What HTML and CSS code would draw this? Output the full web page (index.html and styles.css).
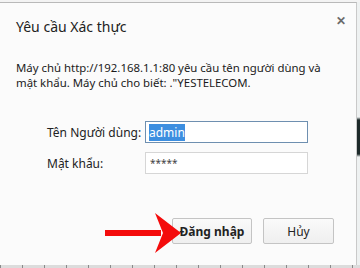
FILE: index.html
```html
<!DOCTYPE html>
<html lang="vi">
<head>
  <meta charset="UTF-8" />
  <title>Yêu cầu Xác thực</title>
  <link rel="stylesheet" href="styles.css">
</head>
<body>

<div class="screen">
  <div class="dialog">
    <div class="title-row">
      <h1>Yêu cầu Xác thực</h1>
      <span class="close">&#x2715;</span>
    </div>

    <p class="message">Máy chủ http://192.168.1.1:80 yêu cầu tên người dùng và mật khẩu. Máy chủ cho biết: ."YESTELECOM.</p>

    <div class="form">
      <label for="user">Tên Người dùng:</label>
      <div class="field focused"><span class="selected">admin</span></div>
      <label for="pass">Mật khẩu:</label>
      <div class="field"><span class="dots">*****</span></div>
    </div>

    <div class="actions">
      <!-- red arrow pointing at login -->
      <svg class="arrow" width="76" height="40" viewBox="0 0 76 40">
        <rect x="0" y="17" width="56" height="6" fill="#f40c0c"/>
        <path d="M50 0 L76 20 L50 40 L58 20 Z" fill="#f40c0c"/>
      </svg>
      <button class="btn primary">Đăng nhập</button>
      <button class="btn">Hủy</button>
    </div>
  </div>
  <div class="side"></div>
</div>
<div class="bottom"></div>

</body>
</html>
```

FILE: styles.css
```css
* {
  box-sizing: border-box;
  margin: 0;
  padding: 0;
}

body {
  width: 360px;
  height: 268px;
  overflow: hidden;
  background: #f3f3f3;
  font-family: 'Noto Sans', 'Open Sans', sans-serif;
  color: #1e1e1e;
}

.screen {
  display: flex;
  height: 265px;
  padding-top: 2px;
}

.dialog {
  flex: 0 0 357px;
  background: #fbfbfb;
  border-top: 1px solid #b9b9b9;
  border-right: 1px solid #c9c9c9;
  padding: 0 0 0 16px;
  position: relative;
}

.side {
  flex: 1;
  background: linear-gradient(#eef1f1 0, #eef1f1 115px, #1d2a2a 118px, #1d2a2a 152px, #eef1f1 155px);
}

.title-row {
  display: flex;
  justify-content: space-between;
  align-items: center;
  height: 32px;
  margin-top: 7px;
  padding-right: 10px;
}

h1 {
  font-size: 14px;
  font-weight: 400;
  color: #222;
}

.close {
  align-self: flex-start;
  margin-top: 2px;
  font-size: 12px;
  font-weight: 700;
  color: #6b6b6b;
}

.message {
  margin-top: 18px;
  font-size: 11.4px;
  line-height: 15px;
  width: 320px;
  color: #1a1a1a;
}

.form {
  margin-top: 31px;
  margin-left: 31px;
  display: grid;
  grid-template-columns: 98px 163px;
  row-gap: 9px;
  align-items: center;
}

label {
  font-size: 12px;
  color: #222;
}

.field {
  height: 22px;
  background: #fff;
  border: 1px solid #d6d6d6;
  padding: 0 3px;
  display: flex;
  align-items: center;
  font-size: 12px;
}

.field.focused {
  border-color: #6e8fb0;
}

.selected {
  background: #3c8ee0;
  color: #fff;
  padding: 1px 0;
  line-height: 15px;
}

.dots {
  color: #444;
  font-size: 10px;
  padding-left: 1px;
}

.actions {
  display: flex;
  justify-content: flex-end;
  align-items: center;
  gap: 11px;
  margin-top: 44px;
  padding-right: 22px;
  position: relative;
}

.btn {
  height: 26px;
  background: linear-gradient(#fafafa, #efefef);
  border: 1px solid #c4c4c4;
  border-radius: 2px;
  font-family: inherit;
  font-size: 12px;
  color: #222;
}

.btn.primary {
  width: 80px;
  font-weight: 700;
}

.btn:last-child {
  width: 71px;
}

.arrow {
  position: absolute;
  left: 89px;
  top: -5px;
}

.bottom {
  height: 3px;
  background: repeating-linear-gradient(90deg, #8a8a8a 0 1px, #dcdcdc 1px 22px);
}
```
